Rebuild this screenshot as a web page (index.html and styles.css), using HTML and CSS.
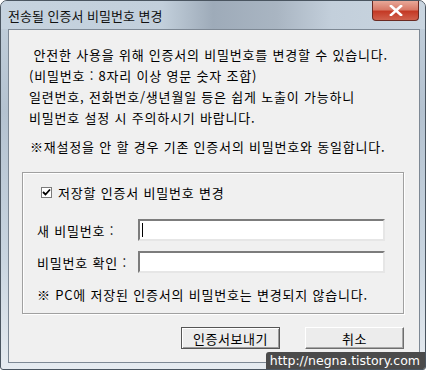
FILE: index.html
```html
<!DOCTYPE html>
<html lang="ko">
<head>
  <meta charset="UTF-8" />
  <title>전송될 인증서 비밀번호 변경</title>
  <link rel="stylesheet" href="styles.css">
</head>
<body>
  <div class="window">
    <div class="titlebar">
      <span class="title">전송될 인증서 비밀번호 변경</span>
      <div class="close">
        <svg width="14" height="11" viewBox="0 0 14 11">
          <path d="M2 1 L12 10 M12 1 L2 10" stroke="#fff" stroke-width="2.6" stroke-linecap="square" />
        </svg>
      </div>
    </div>
    <div class="client">
      <div class="intro">
        <p>&nbsp;안전한 사용을 위해 인증서의 비밀번호를 변경할 수 있습니다.</p>
        <p>(비밀번호 : 8자리 이상 영문 숫자 조합)</p>
        <p>일련번호, 전화번호/생년월일 등은 쉽게 노출이 가능하니</p>
        <p>비밀번호 설정 시 주의하시기 바랍니다.</p>
      </div>
      <p class="notice">※재설정을 안 할 경우 기존 인증서의 비밀번호와 동일합니다.</p>

      <div class="group">
        <label class="check">
          <span class="box">
            <svg width="9" height="9" viewBox="0 0 9 9">
              <path d="M1 4 L3.5 6.5 L8 1.5" fill="none" stroke="#000" stroke-width="1.8" />
            </svg>
          </span>
          저장할 인증서 비밀번호 변경
        </label>
        <div class="field">
          <span class="field-label">새 비밀번호 :</span>
          <div class="textbox"><span class="caret"></span></div>
        </div>
        <div class="field">
          <span class="field-label">비밀번호 확인 :</span>
          <div class="textbox"></div>
        </div>
        <p class="note">※ PC에 저장된 인증서의 비밀번호는 변경되지 않습니다.</p>
      </div>

      <div class="buttons">
        <button class="btn default">인증서보내기</button>
        <button class="btn">취소</button>
      </div>
    </div>
    <div class="watermark">http://negna.tistory.com</div>
  </div>
</body>
</html>
```

FILE: styles.css
```css
body {
  margin: 0;
  font-family: "Noto Sans CJK KR", "Noto Sans", sans-serif;
  font-size: 13px;
  color: #000;
}
p {
  margin: 0;
}
.window {
  position: relative;
  width: 426px;
  height: 370px;
  box-sizing: border-box;
  display: flex;
  flex-direction: column;
  border: 1px solid #4a5560;
  border-radius: 7px 7px 3px 3px;
  background: linear-gradient(to bottom, #c3d0dc, #b4c2d0 30%, #c9d5e0 70%, #e6ebf0);
  overflow: hidden;
}
.titlebar {
  height: 28px;
  display: flex;
  align-items: flex-start;
  justify-content: space-between;
  background: linear-gradient(to right, #c6d3df 0%, #c2cfdb 38%, #9eabb9 50%, #a9b5c2 65%, #c3cfdb 78%, #c9d5e0 100%);
}
.title {
  padding: 5px 0 0 7px;
  font-size: 13px;
  color: #111;
}
.close {
  width: 45px;
  height: 19px;
  margin-right: 6px;
  display: flex;
  align-items: center;
  justify-content: center;
  border: 1px solid #6a2a22;
  border-top: none;
  border-radius: 0 0 4px 4px;
  background: linear-gradient(to bottom, #e8a898 0%, #d87a68 45%, #c43a26 55%, #d0604c 100%);
}
.client {
  flex: 1;
  margin: 0 5px 6px 7px;
  padding: 14px 15px 0 20px;
  border: 1px solid #7d8894;
  background: #f0f0f0;
  letter-spacing: 0.8px;
}
.intro p {
  line-height: 21px;
}
.notice {
  margin-top: 8px;
  line-height: 21px;
  padding-left: 1px;
}
.group {
  margin: 15px 0 0 -7px;
  padding: 9px 14px 8px 14px;
  border: 1px solid #a0a0a0;
  box-shadow: inset 1px 1px 0 #fff, 1px 1px 0 #fff;
}
.check {
  display: flex;
  align-items: center;
  gap: 6px;
  line-height: 21px;
  padding-left: 4px;
}
.box {
  width: 9px;
  height: 9px;
  display: flex;
  align-items: center;
  justify-content: center;
  border: 1px solid #7a7a7a;
  background: #fff;
}
.field {
  display: flex;
  align-items: center;
  margin-top: 10px;
}
.check + .field {
  margin-top: 16px;
}
.field-label {
  width: 101px;
}
.textbox {
  position: relative;
  width: 243px;
  height: 18px;
  background: #fff;
  border: 2px solid;
  border-color: #7c7c7c #e6e6e6 #e6e6e6 #7c7c7c;
}
.caret {
  position: absolute;
  left: 2px;
  top: 2px;
  width: 1px;
  height: 14px;
  background: #000;
}
.note {
  margin-top: 11px;
  line-height: 21px;
}
.buttons {
  display: flex;
  justify-content: flex-end;
  gap: 25px;
  margin-top: 13px;
}
.btn {
  width: 99px;
  height: 22px;
  padding: 0;
  font-family: inherit;
  font-size: 13px;
  letter-spacing: 0.5px;
  color: #000;
  background: #ececec;
  border: 1px solid;
  border-color: #fff #6e6e6e #6e6e6e #fff;
  box-shadow: inset -1px -1px 0 #a8a8a8;
}
.btn.default {
  border: 1px solid #555;
  box-shadow: inset 1px 1px 0 #fff, inset -1px -1px 0 #9a9a9a;
}
.watermark {
  position: absolute;
  right: 0;
  bottom: 0;
  padding: 0 5px 0 4px;
  height: 17px;
  line-height: 17px;
  background: #4b4b4b;
  color: #fff;
  font-family: "DejaVu Sans", sans-serif;
  font-size: 12.5px;
  letter-spacing: 0;
  border-radius: 3px 0 0 0;
}
```
